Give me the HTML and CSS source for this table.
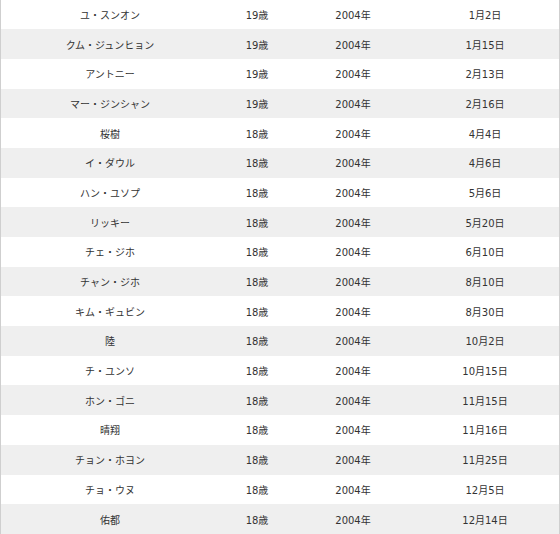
FILE: index.html
```html
<!DOCTYPE html>
<html lang="ja">
<head>
<meta charset="utf-8">
<link rel="stylesheet" href="styles.css">
</head>
<body>
<div class="members" role="table">
<div class="row" role="row"><span>ユ・スンオン</span><span>19歳</span><span>2004年</span><span>1月2日</span></div>
<div class="row" role="row"><span>クム・ジュンヒョン</span><span>19歳</span><span>2004年</span><span>1月15日</span></div>
<div class="row" role="row"><span>アントニー</span><span>19歳</span><span>2004年</span><span>2月13日</span></div>
<div class="row" role="row"><span>マー・ジンシャン</span><span>19歳</span><span>2004年</span><span>2月16日</span></div>
<div class="row" role="row"><span>桜樹</span><span>18歳</span><span>2004年</span><span>4月4日</span></div>
<div class="row" role="row"><span>イ・ダウル</span><span>18歳</span><span>2004年</span><span>4月6日</span></div>
<div class="row" role="row"><span>ハン・ユソプ</span><span>18歳</span><span>2004年</span><span>5月6日</span></div>
<div class="row" role="row"><span>リッキー</span><span>18歳</span><span>2004年</span><span>5月20日</span></div>
<div class="row" role="row"><span>チェ・ジホ</span><span>18歳</span><span>2004年</span><span>6月10日</span></div>
<div class="row" role="row"><span>チャン・ジホ</span><span>18歳</span><span>2004年</span><span>8月10日</span></div>
<div class="row" role="row"><span>キム・ギュビン</span><span>18歳</span><span>2004年</span><span>8月30日</span></div>
<div class="row" role="row"><span>陸</span><span>18歳</span><span>2004年</span><span>10月2日</span></div>
<div class="row" role="row"><span>チ・ユンソ</span><span>18歳</span><span>2004年</span><span>10月15日</span></div>
<div class="row" role="row"><span>ホン・ゴニ</span><span>18歳</span><span>2004年</span><span>11月15日</span></div>
<div class="row" role="row"><span>晴翔</span><span>18歳</span><span>2004年</span><span>11月16日</span></div>
<div class="row" role="row"><span>チョン・ホヨン</span><span>18歳</span><span>2004年</span><span>11月25日</span></div>
<div class="row" role="row"><span>チョ・ウヌ</span><span>18歳</span><span>2004年</span><span>12月5日</span></div>
<div class="row" role="row"><span>佑都</span><span>18歳</span><span>2004年</span><span>12月14日</span></div>
</div>
</body>
</html>
```
FILE: styles.css
```css
html, body {
  margin: 0;
  padding: 0;
  background: #ffffff;
}
body {
  overflow: hidden;
}
.members {
  width: 560px;
  box-sizing: border-box;
  margin-top: -0.5px;
  border-left: 1px solid #cfcfcf;
  border-right: 1px solid #cfcfcf;
  font-family: "DejaVu Sans", "Noto Sans CJK JP", sans-serif;
  font-size: 10px;
  color: #333333;
}
.row {
  display: grid;
  grid-template-columns: 218px 76px 116px 148px;
  height: 29.7px;
  align-items: center;
  text-align: center;
  white-space: nowrap;
}
.row:nth-child(even) {
  background: #efefef;
}
```
